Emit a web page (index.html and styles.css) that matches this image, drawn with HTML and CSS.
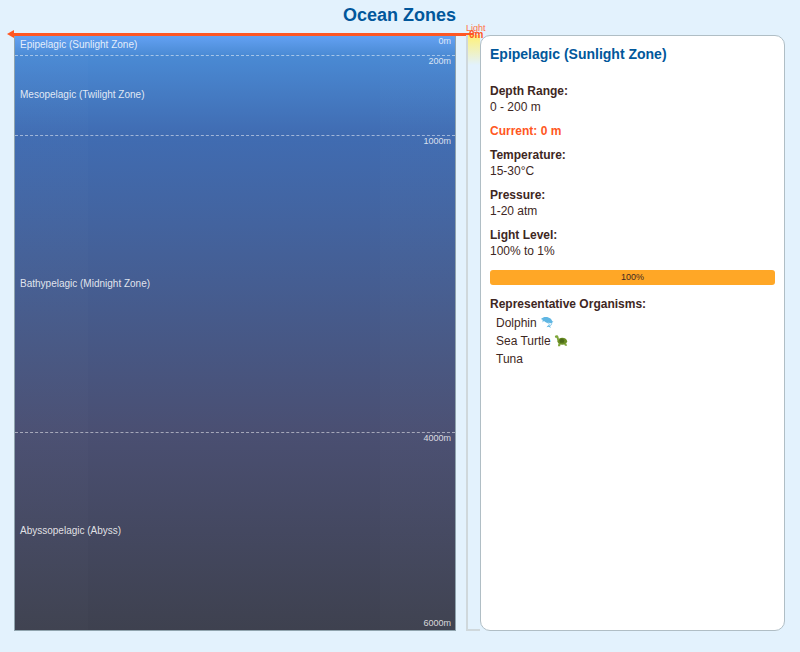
FILE: index.html
```html
<!DOCTYPE html>
<html lang="en">
<head>
<meta charset="utf-8">
<title>Ocean Zones</title>
<link rel="stylesheet" href="styles.css">
</head>
<body>
<h1 class="title">Ocean Zones</h1>
<main class="layout">
  <section class="ocean">
    <div class="bands"></div>
    <div class="zone zone-epi"><span class="zone-name">Epipelagic (Sunlight Zone)</span><span class="depth">200m</span></div>
    <div class="zone zone-meso"><span class="zone-name">Mesopelagic (Twilight Zone)</span><span class="depth">1000m</span></div>
    <div class="zone zone-bathy"><span class="zone-name">Bathypelagic (Midnight Zone)</span><span class="depth">4000m</span></div>
    <div class="zone zone-abyss"><span class="zone-name">Abyssopelagic (Abyss)</span></div>
    <span class="depth depth-top">0m</span>
    <span class="depth depth-bottom">6000m</span>
    <div class="marker"></div>
  </section>
  <section class="light">
    <div class="light-glow"></div>
    <span class="light-label">Light</span>
    <span class="light-current">0m</span>
  </section>
  <aside class="panel">
    <h2 class="panel-title">Epipelagic (Sunlight Zone)</h2>
    <div class="fact"><strong>Depth Range:</strong><br>0 - 200 m</div>
    <div class="fact current">Current: 0 m</div>
    <div class="fact"><strong>Temperature:</strong><br>15-30°C</div>
    <div class="fact"><strong>Pressure:</strong><br>1-20 atm</div>
    <div class="fact"><strong>Light Level:</strong><br>100% to 1%</div>
    <div class="meter">100%</div>
    <strong class="org-title">Representative Organisms:</strong>
    <ul class="orgs">
      <li>Dolphin <svg class="emoji" viewBox="0 0 16 16"><path fill="#5fb6e3" d="M1 4.5C4 1.5 9 1.5 12 4c.9.8 1.6 1.8 2 3l1.4.6-1.3.8c0 2-1 3.6-2.6 4.4l1 2-2.6-1.400-2.400.5 1.300-1.700c1-.5 1.500-1.300 1.500-2.300C7.500 8.500 5 8 4.500 6.500L3 8.500 3 5.500z"/><path fill="#dff1fa" d="M8 8c1.500 1.200 3.500 1.500 5.500 1-.5 1.800-1.500 3-3 3.600 1-1.300 0-3.300-2.500-4.600z"/></svg></li>
      <li>Sea Turtle <svg class="emoji" viewBox="0 0 16 16"><ellipse fill="#6b8e23" cx="9.500" cy="9.500" rx="5.500" ry="4"/><path fill="#4d6b1a" d="M6 8l3-2 3 2-1 3H7z"/><path fill="#7fa63a" d="M1 3.500c1.500-1.500 3.500-1 4 .5l1 4-2 1-1-3.500c-1 .3-2 0-2-2z"/><path fill="#7fa63a" d="M5 12l2.500.5L7 15H4.500zM11.500 12.500l2.500-.5 1 2.500h-2.500z"/></svg></li>
      <li>Tuna</li>
    </ul>
  </aside>
</main>
</body>
</html>
```
FILE: styles.css
```css
* {
  box-sizing: border-box;
}

html, body {
  height: 100%;
}

body {
  margin: 0;
  padding: 5px 15px 21px 14px;
  background: #e3f2fd;
  font-family: "Liberation Sans", Arial, sans-serif;
  color: #3e2723;
  display: flex;
  flex-direction: column;
  overflow: hidden;
}

.title {
  margin: 0;
  height: 30px;
  font-size: 18px;
  line-height: 21px;
  font-weight: 700;
  text-align: center;
  color: #01579b;
}

.layout {
  flex: 1;
  display: flex;
  min-height: 0;
}

.ocean {
  position: relative;
  width: 442px;
  margin-right: 10px;
  border: 1px solid #90a4ae;
  border-top: 0;
  display: flex;
  flex-direction: column;
  background: linear-gradient(to bottom, #64a2f4 0%, #4a8ad4 3.4%, #406cb2 16.6%, #4a4f72 66.7%, #3e414f 100%);
}

.bands {
  position: absolute;
  inset: 0;
  background: linear-gradient(to right, rgba(255,255,255,.012) 0 16.500%, rgba(0,0,0,0) 16.500% 83%, rgba(255,255,255,.012) 83% 100%);
}

.zone {
  position: relative;
  display: flex;
  align-items: center;
  padding-left: 5px;
  border-bottom: 1px dashed rgba(255,255,255,.5);
  min-height: 0;
}

.zone-epi { flex: 200 1 0; }
.zone-meso { flex: 800 1 0; }
.zone-bathy { flex: 3000 1 0; }
.zone-abyss { flex: 2000 1 0; border-bottom: 0; }

.zone-name {
  font-size: 10px;
  line-height: 12px;
  color: rgba(255,255,255,.85);
}

.depth {
  position: absolute;
  right: 4px;
  top: 100%;
  margin-top: 1px;
  font-size: 9px;
  line-height: 10px;
  color: rgba(255,255,255,.8);
}

.depth-top {
  top: 1px;
  margin-top: 0;
}

.depth-bottom {
  top: auto;
  bottom: 2px;
  margin-top: 0;
}

.marker {
  position: absolute;
  top: -2px;
  left: -1px;
  width: 459px;
  height: 3px;
  background: #ff5722;
}

.marker::before {
  content: "";
  position: absolute;
  left: -7px;
  top: -3px;
  border-style: solid;
  border-width: 4.500px 7px 4.500px 0;
  border-color: transparent #ff5722 transparent transparent;
}

.light {
  position: relative;
  width: 14px;
  border: 2px solid #cfd8dc;
  border-right: 0;
  border-top: 0;
  background: #e3f2fd;
}

.light-glow {
  height: 30px;
  background: linear-gradient(to bottom, #fff176, rgba(255,241,118,0));
}

.light-label {
  position: absolute;
  top: -12px;
  left: -2px;
  font-size: 9px;
  line-height: 10px;
  color: #ff7043;
}

.light-current {
  position: absolute;
  top: -6px;
  left: 1px;
  font-size: 10px;
  line-height: 11px;
  font-weight: 700;
  color: #ff5722;
}

.panel {
  width: 305px;
  padding: 10px 9px;
  background: #fff;
  border: 1px solid #b0bec5;
  border-radius: 10px;
  font-size: 12px;
  line-height: 16px;
}

.panel-title {
  margin: 0 0 20px;
  font-size: 14px;
  line-height: 17px;
  font-weight: 700;
  color: #01579b;
}

.fact {
  margin-bottom: 8px;
}

.current {
  color: #ff5722;
  font-weight: 700;
}

.meter {
  height: 15px;
  margin: 11px 0 11px;
  border-radius: 3px;
  background: #ffa726;
  font-size: 9px;
  line-height: 15px;
  text-align: center;
}

.org-title {
  display: block;
}

.orgs {
  margin: 2px 0 0;
  padding: 0 0 0 6px;
  list-style: none;
}

.orgs li {
  height: 18px;
  line-height: 18px;
}

.emoji {
  width: 14px;
  height: 14px;
  vertical-align: -2px;
}
```
